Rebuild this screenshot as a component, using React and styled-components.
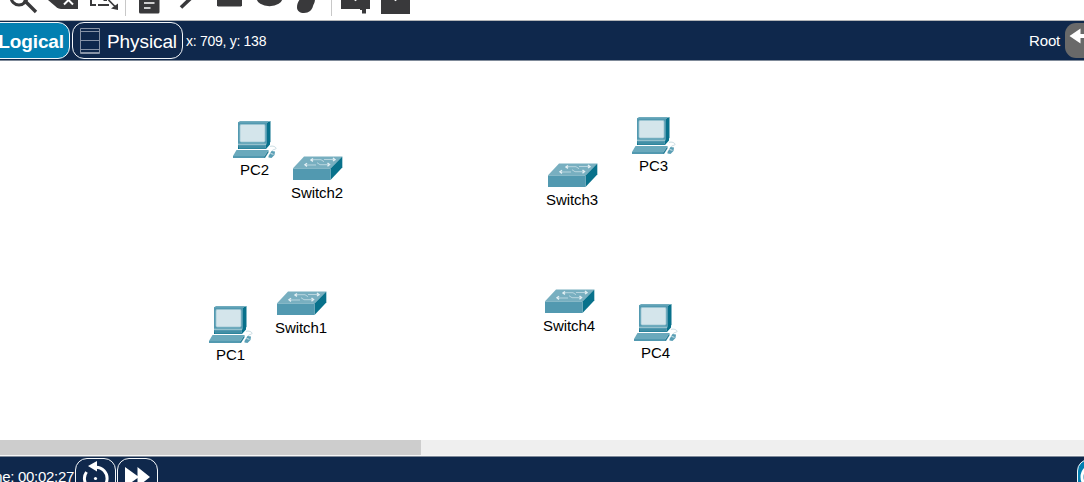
import React from "react";
import styled, { createGlobalStyle } from "styled-components";

const Global = createGlobalStyle`
  html, body { margin: 0; padding: 0; overflow: hidden; background: #fff; }
  body { font-family: "Liberation Sans", Arial, sans-serif; }
`;

const navy = "#0f284c";
const ink = "#39393b";

const Window = styled.div`
  width: 1084px;
  height: 482px;
  display: flex;
  flex-direction: column;
  overflow: hidden;
  background: #fff;
`;

const Toolbar = styled.header`
  flex: 0 0 20px;
  display: flex;
  align-items: flex-start;
  padding-left: 9px;
`;

const Tool = styled.svg`
  flex: none;
  width: ${(p) => p.$w}px;
  height: 16px;
  margin-right: ${(p) => p.$gap}px;
  overflow: visible;
`;

const Separator = styled.span`
  width: 1px;
  height: 16px;
  margin-right: ${(p) => p.$gap}px;
  background: #c8c8c8;
`;

const NavBar = styled.nav`
  flex: 0 0 39px;
  display: flex;
  align-items: center;
  border-top: 1px solid #b4b6b8;
  border-bottom: 1px solid #7f8a99;
  background: ${navy};
  color: #fff;
`;

const Tab = styled.button`
  box-sizing: border-box;
  height: 37px;
  width: ${(p) => p.$w}px;
  margin: 0 2px 0 ${(p) => p.$shift || 0}px;
  padding: 0 5px 0 7px;
  display: flex;
  align-items: center;
  justify-content: ${(p) => (p.$active ? "flex-end" : "space-between")};
  border: 1px solid #f4f7fa;
  border-radius: 12px;
  background: ${(p) => (p.$active ? "#037fb1" : navy)};
  color: #fff;
  font: ${(p) => (p.$active ? "bold" : "normal")} 19px "Liberation Sans", Arial, sans-serif;
  letter-spacing: -0.1px;
  white-space: nowrap;
`;

const TabText = styled.span`
  padding-top: 2px;
`;

const Coordinates = styled.span`
  margin-left: 1px;
  font-size: 14px;
  letter-spacing: -0.28px;
  line-height: 16px;
  white-space: nowrap;
`;

const RootLabel = styled.span`
  margin-left: auto;
  margin-right: 5px;
  font-size: 15px;
  letter-spacing: -0.2px;
  line-height: 16px;
`;

const BackButton = styled.button`
  flex: none;
  width: 36px;
  height: 35px;
  margin-right: -17px;
  padding: 0;
  border: 0;
  border-radius: 11px;
  background: #696969;
  display: flex;
`;

const Workspace = styled.main`
  position: relative;
  flex: 0 0 379px;
  background: #fff;
`;

const Node = styled.div`
  position: absolute;
  left: ${(p) => p.$x}px;
  top: ${(p) => p.$y}px;
  width: ${(p) => p.$w}px;
  display: flex;
  flex-direction: column;
  align-items: center;
`;

const NodeLabel = styled.span`
  margin-top: 2px;
  margin-left: ${(p) => p.$shift}px;
  font-size: 15px;
  letter-spacing: -0.1px;
  line-height: 17px;
  color: #000;
  white-space: nowrap;
`;

const ScrollTrack = styled.div`
  flex: 0 0 15px;
  border-bottom: 1px solid #f7f7f7;
  background: #efefef;
`;

const ScrollThumb = styled.div`
  width: 421px;
  height: 15px;
  background: #cdcdcd;
`;

const StatusBar = styled.footer`
  flex: 1;
  display: flex;
  align-items: flex-start;
  border-top: 1px solid #7f8a99;
  background: ${navy};
  color: #fff;
`;

const Clock = styled.span`
  width: 74px;
  margin-right: 1px;
  padding-top: 11px;
  display: flex;
  justify-content: flex-end;
  font-size: 15px;
  letter-spacing: -0.3px;
  line-height: 17px;
  white-space: nowrap;
`;

const TimeButton = styled.button`
  box-sizing: border-box;
  flex: none;
  width: 41px;
  height: 38px;
  margin: 1px 1px 0 0;
  padding: 0;
  border: 1px solid #f4f7fa;
  border-radius: 12px;
  background: ${navy};
  display: flex;
`;

const RealtimeButton = styled.button`
  box-sizing: border-box;
  flex: none;
  width: 60px;
  height: 38px;
  margin: 2px -53px 0 auto;
  padding: 0;
  border: 1px solid #f4f7fa;
  border-radius: 12px;
  background: #037fb1;
  display: flex;
`;

const PcIcon = () => (
  <svg width="44" height="38" viewBox="0 0 44 38">
    <path d="M34 1.5 37.5 0V21L34 24Z" fill="#08718b" />
    <path d="M5 1H34V23H5Z" fill="#5299b0" />
    <path d="M4.8 1.5 7 0H37.5L34 1.5Z" fill="#6fabbd" />
    <rect x="7" y="3.5" width="25" height="17.5" rx="1.2" fill="#d4e5eb" stroke="#9cc5d2" strokeWidth=".8" />
    <path d="M5 23.5H33L37 20V23.5L33 28H5Z" fill="#08718b" />
    <path d="M5 23.5H33V27.5H6Z" fill="#5299b0" />
    <path d="M5 23.2H33" stroke="#c3dde4" strokeWidth=".7" />
    <path d="M6 26H32" stroke="#2b8098" strokeWidth=".8" />
    <path d="M3.5 29H35.5L31.5 35H0Z" fill="#6aa9bc" />
    <path d="M35.5 29V31.5L32 37H0V35H31.5Z" fill="#2b8098" />
    <path d="M0 35H31.5V37H0Z" fill="#5299b0" />
    <path d="M37 25.5C39 24.5 43 25.5 43 27.5 42.5 29 38.5 28 39.5 30.5" fill="none" stroke="#b9d0d8" strokeWidth=".8" />
    <path d="M35.5 35 38.5 30 42 30.5 41.5 34 38.5 37 35.5 36.5Z" fill="#5a9fb5" />
    <path d="m37.5 32.5 3 .8" stroke="#d4e5eb" />
  </svg>
);

const SwitchIcon = () => (
  <svg width="50" height="26" viewBox="0 0 50 26">
    <path d="M11 .5H49.3L37.5 12.5H-.3Z" fill="#78afc0" />
    <path d="M49.3 .5V11.5L37.5 24V12.5Z" fill="#08718b" />
    <path d="M-.3 12.5H37.5V24H-.3Z" fill="#5299b0" />
    <g fill="none" stroke="#e3eff3" strokeWidth="1">
      <path d="M19 3.7h9l3 2M42 3.5H31M35 8.7h-8l-3-2M23 9H12" strokeOpacity=".6" />
      <path d="m20 2.5-2 1.4L20 5.4M40 2l2 1.6L40 5M14 7.2l-2 1.6L14 10.4M34.5 7l2 1.6-2 1.6" strokeWidth="1.4" />
    </g>
  </svg>
);

const devices = [
  { kind: "pc", name: "PC2", x: 233, y: 60 },
  { kind: "switch", name: "Switch2", x: 293, y: 95 },
  { kind: "switch", name: "Switch3", x: 548, y: 102 },
  { kind: "pc", name: "PC3", x: 632, y: 56 },
  { kind: "switch", name: "Switch1", x: 277, y: 230 },
  { kind: "pc", name: "PC1", x: 209, y: 245 },
  { kind: "switch", name: "Switch4", x: 545, y: 228 },
  { kind: "pc", name: "PC4", x: 634, y: 243 },
];

const Device = ({ kind, name, x, y }) => (
  <Node $x={x} $y={y} $w={kind === "pc" ? 44 : 50}>
    {kind === "pc" ? <PcIcon /> : <SwitchIcon />}
    <NodeLabel $shift={kind === "pc" ? -1 : -2}>{name}</NodeLabel>
  </Node>
);

const Tools = () => (
  <Toolbar>
    <Tool $w={28} $gap={12} viewBox="0 0 28 16">
      <circle cx="10" cy="-3" r="8" fill="none" stroke={ink} strokeWidth="3" />
      <path d="m15 0 12 12" stroke={ink} strokeWidth="3.4" />
    </Tool>
    <Tool $w={29} $gap={12} viewBox="0 0 29 16">
      <path d="M-1 0H29V9H12Q9.5 9 7.5 7.3Z" fill={ink} />
      <path d="m15 4.5 4.5-4.5 4.5 4.5" fill="none" stroke="#fff" strokeWidth="2" />
    </Tool>
    <Tool $w={28} $gap={7} viewBox="0 0 28 16">
      <path d="M1 0V5H6M8 5H19M13.5 0h3.5" fill="none" stroke={ink} strokeWidth="2" />
      <path d="m18.5 0 7 7" stroke={ink} strokeWidth="1.7" />
      <path d="M28 3.5V10L21 8.5Z" fill={ink} />
    </Tool>
    <Separator $gap={13} />
    <Tool $w={21} $gap={22} viewBox="0 0 21 16">
      <path d="M0 0H20.5V12Q20.5 13.5 19 13.5H1.5Q0 13.5 0 12Z" fill={ink} />
      <path d="M5 3H15.5M5 8H11.5" stroke="#fff" strokeWidth="1.7" />
    </Tool>
    <Tool $w={10} $gap={25} viewBox="0 0 10 16">
      <path d="M-1 7.5 9-2" stroke={ink} strokeWidth="3.6" />
    </Tool>
    <Tool $w={25} $gap={15} viewBox="0 0 25 16">
      <path d="M0-2H25V5.5L24 6.5H1L0 5.5Z" fill={ink} />
    </Tool>
    <Tool $w={25} $gap={15} viewBox="0 0 25 16">
      <ellipse cx="12.5" cy="-2" rx="13" ry="8.3" fill={ink} />
    </Tool>
    <Tool $w={19} $gap={15} viewBox="0 0 19 16">
      <path d="M3-1C1 2 0 4 0 7.5 0 11 3 13 7 13 12 13 15 10 16 6 16.5 4 18 3 18-1Z" fill={ink} />
    </Tool>
    <Separator $gap={9} />
    <Tool $w={29} $gap={11} viewBox="0 0 29 16">
      <path d="M0 0H29V9H25V13.5H21V10H19V9H0Z" fill={ink} />
      <path d="M12-1 14.5 1.2 17-1Z" fill="#fff" />
    </Tool>
    <Tool $w={29} $gap={0} viewBox="0 0 29 16">
      <path d="M0 0H29V14H0Z" fill={ink} />
      <path d="M12-1 14.5 1.2 17-1Z" fill="#fff" />
    </Tool>
  </Toolbar>
);

export default function App() {
  return (
    <Window>
      <Global />
      <Tools />
      <NavBar>
        <Tab $active $w={90} $shift={-20}>
          <TabText>Logical</TabText>
        </Tab>
        <Tab $w={111}>
          <svg width="20" height="28" viewBox="0 0 20 28" fill="none" stroke="#8793a6">
            <path d="M.5 1.5h19v25H.5ZM.5 4.5h19M.5 13.5h19M.5 22.5h19M.5 25.5h19" />
          </svg>
          <TabText>Physical</TabText>
        </Tab>
        <Coordinates>x: 709, y: 138</Coordinates>
        <RootLabel>Root</RootLabel>
        <BackButton aria-label="Back">
          <svg width="36" height="35" viewBox="0 0 36 35">
            <path d="M4.5 13 15.5 5.5V11H26V15H15.5V20.5Z" fill="#fff" />
          </svg>
        </BackButton>
      </NavBar>
      <Workspace>
        {devices.map((d) => (
          <Device key={d.name} {...d} />
        ))}
      </Workspace>
      <ScrollTrack>
        <ScrollThumb />
      </ScrollTrack>
      <StatusBar>
        <Clock>Time: 00:02:27</Clock>
        <TimeButton aria-label="Power cycle devices">
          <svg width="39" height="36" viewBox="0 0 39 36" fill="none">
            <path d="M10.5 13A11.3 11.3 0 1 0 19 8.2" stroke="#fff" strokeWidth="3" />
            <path d="M12 7 21 2V12.5Z" fill="#fff" />
            <circle cx="19.5" cy="19.5" r="1.6" fill="#fff" />
          </svg>
        </TimeButton>
        <TimeButton aria-label="Fast forward">
          <svg width="39" height="36" viewBox="0 0 39 36">
            <path d="M7 8 19.5 17 19.5 8 32 18 19.5 28V19L7 28Z" fill="#fff" />
          </svg>
        </TimeButton>
        <RealtimeButton aria-label="Realtime">
          <svg width="58" height="36" viewBox="0 0 58 36">
            <circle cx="16" cy="17" r="12" fill="none" stroke="#fff" strokeWidth="3" />
          </svg>
        </RealtimeButton>
      </StatusBar>
    </Window>
  );
}
